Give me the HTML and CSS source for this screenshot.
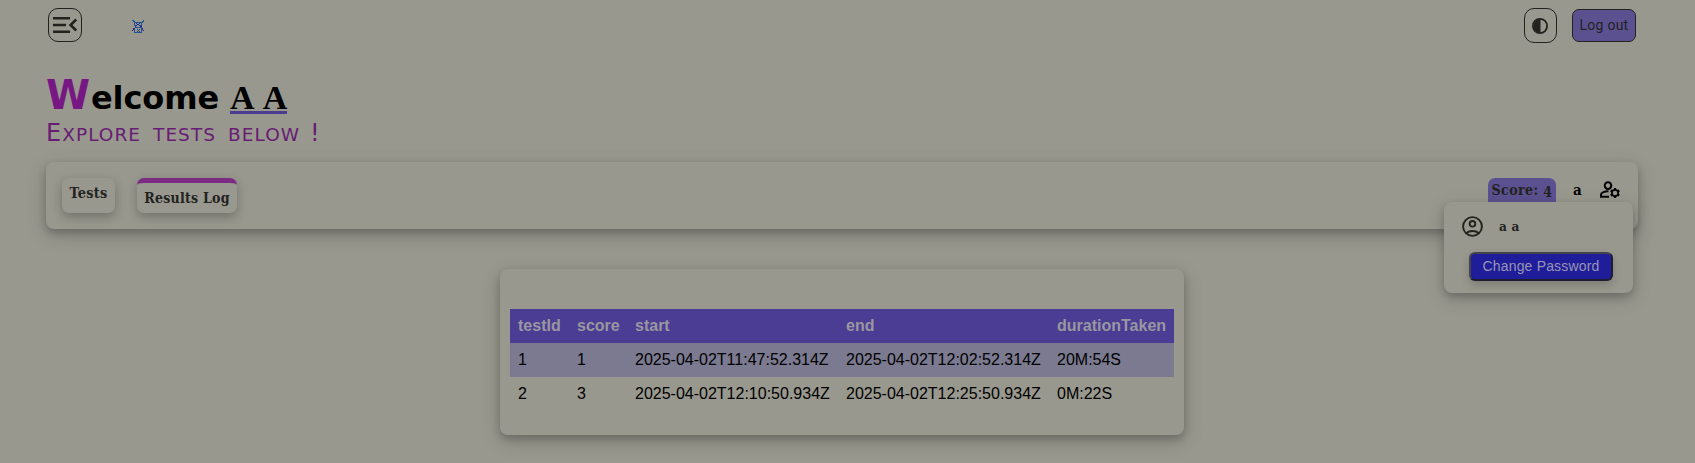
FILE: index.html
```html
<!DOCTYPE html>
<html lang="en">
<head>
<meta charset="utf-8">
<title>Dashboard</title>
<link rel="stylesheet" href="styles.css">
</head>
<body>
<header class="topbar">
  <button class="icon-btn menu-btn" aria-label="Menu">
    <svg width="26" height="18" viewBox="0 0 26 18" fill="none" stroke="#22221f" stroke-width="2.6"><path d="M1 2.200H18M1 9H14M1 15.800H18M24.200 3.500L18.600 9L24.200 14.500"/></svg>
  </button>
  <svg class="logo" width="12" height="13" viewBox="0 0 12 13" fill="none" shape-rendering="crispEdges"><path d="M0 .5H1V1.500H2V2.500H10V1.500H11V.5H12M2.500 3V5H3.500V7.500H9.500V12.500H2.500V8.500M9.500 3V5H8.500V7" stroke="#1f5495"/><path d="M4 3.500H5M7 3.500H8M5 4.500H7M4 5.500H5M7 5.500H8M3 6.500H4M8 6.500H10M1 8.500H3M10 8.500H11M0 10.500H1M1 9.500H2M11 10.500H12M10 9.500H11" stroke="#30208f"/><path d="M5 9.500H6M7 9.500H8M6 10.500H7M5 11.500H6M7 11.500H8" stroke="#293e79"/></svg>
  <div class="top-actions">
    <button class="icon-btn theme-btn" aria-label="Theme">
      <svg width="16" height="16" viewBox="0 0 16 16"><circle cx="8" cy="8" r="7.100" fill="none" stroke="#22221f" stroke-width="1.800"/><path d="M8.500 1A7 7 0 0 0 8.500 15Z" fill="#22221f"/></svg>
    </button>
    <button class="logout">Log out</button>
  </div>
</header>
<main>
  <h1 class="welcome"><span class="initial">W</span><span class="rest">elcome</span><span class="name">A A</span></h1>
  <p class="tagline">Explore tests below <span class="bang">!</span></p>
  <nav class="panel nav">
    <a class="tab tests">Tests</a>
    <a class="tab results">Results Log</a>
    <div class="account">
      <span class="score">Score: <span class="digit">4</span></span>
      <span class="user">a</span>
      <svg class="gear" width="22" height="18" viewBox="0 0 22 18" fill="none" stroke="#000" stroke-width="2"><circle cx="9" cy="4.600" r="3.300"/><path d="M9.500 10.200C6 10 2 11.700 2 13.500V15.700H10"/><circle cx="16" cy="12" r="3.100" stroke-width="1.700"/><path d="M16 7V9M16 15V17M11.700 9.500L13.400 10.500M18.600 13.500L20.300 14.500M20.300 9.500L18.600 10.500M13.400 13.500L11.700 14.500" stroke-width="2.200"/></svg>
    </div>
    <div class="popup">
      <div class="profile">
        <svg width="21" height="21" viewBox="0 0 21 21" fill="none" stroke="#22221f" stroke-width="1.900"><circle cx="10.500" cy="10.500" r="9.400"/><circle cx="10.500" cy="7.800" r="2.800"/><path d="M4.200 17.200C7.500 14.200 13.500 14.200 16.800 17.200"/></svg>
        <span>a a</span>
      </div>
      <button class="change">Change Password</button>
    </div>
  </nav>
  <section class="panel log">
    <table>
      <colgroup><col class="c-id"><col class="c-score"><col class="c-date"><col class="c-date"><col></colgroup>
      <thead><tr><th>testId</th><th>score</th><th>start</th><th>end</th><th>durationTaken</th></tr></thead>
      <tbody>
        <tr><td>1</td><td>1</td><td>2025-04-02T11:47:52.314Z</td><td>2025-04-02T12:02:52.314Z</td><td>20M:54S</td></tr>
        <tr><td>2</td><td>3</td><td>2025-04-02T12:10:50.934Z</td><td>2025-04-02T12:25:50.934Z</td><td>0M:22S</td></tr>
      </tbody>
    </table>
  </section>
</main>
</body>
</html>
```
FILE: styles.css
```css
* { box-sizing: border-box; }
body { margin: 0; height: 463px; overflow: hidden; background: #99988e; color: #000; font-family: "Liberation Sans", Arial, sans-serif; }
button { padding: 0; margin: 0; font-family: inherit; }
.topbar { height: 70px; padding: 8px 59px 0 48px; display: flex; align-items: flex-start; }
.icon-btn { display: flex; align-items: center; justify-content: center; background: transparent; border: 1px solid #22221f; border-radius: 10px; }
.menu-btn { width: 34px; height: 34px; }
.logo { margin: 12px 0 0 50px; }
.top-actions { margin-left: auto; display: flex; gap: 15px; }
.theme-btn { width: 33px; height: 35px; padding-right: 1px; }
.logout { width: 64px; height: 33px; margin-top: 1px; padding-bottom: 2px; border: 1px solid #22221f; border-radius: 7px; background: #5c5190; color: #22221f; font: 14px Roboto, sans-serif; letter-spacing: .25px; }
main { padding: 0 57px 0 46px; }
.welcome { display: flex; align-items: baseline; margin: 0; height: 49px; font: bold 32px/50px "DejaVu Sans", Verdana, sans-serif; white-space: nowrap; }
.initial { width: 45px; font-size: 40px; color: #761783; }
.rest { width: 139px; letter-spacing: -.1px; }
.name { font: bold 34px/26px "Liberation Serif", Georgia, serif; word-spacing: 3.500px; border-bottom: 3px solid #4b3c90; }
.tagline { margin: 0; height: 43px; line-height: 29px; font-family: "DejaVu Sans", Verdana, sans-serif; font-size: 18.500px; letter-spacing: 1.050px; word-spacing: 5px; text-transform: uppercase; color: #681c74; white-space: nowrap; }
.tagline::first-letter, .bang { font-size: 24px; line-height: 29px; }
.bang { margin-left: -2px; }
.panel { background: #99988e; border-radius: 8px; box-shadow: 0 4px 8px rgba(0,0,0,.2), 0 6px 20px rgba(0,0,0,.17); }
.nav { position: relative; height: 67px; padding: 16px 17px 0 16px; display: flex; align-items: flex-start; font: bold 14px "DejaVu Serif Condensed", "DejaVu Serif", Georgia, serif; letter-spacing: .25px; color: #22221f; }
.tab { height: 35px; line-height: 31px; border-radius: 7px; text-align: center; white-space: nowrap; box-shadow: 0 4px 8px rgba(0,0,0,.16), 0 4px 14px rgba(0,0,0,.1); }
.tests { width: 53px; margin-right: 22px; font-size: 14.300px; }
.results { width: 100px; border-top: 5px solid #7b2b82; }
.account { margin-left: auto; display: flex; align-items: flex-start; }
.score { width: 68px; height: 35px; line-height: 25px; text-align: center; background: #5c5190; border-radius: 7px; white-space: nowrap; letter-spacing: .4px; }
.digit { position: relative; top: 2px; }
.user { margin: 0 16px 0 17px; width: 10px; line-height: 24px; color: #000; font-size: 15px; }
.gear { margin-top: 3px; }
.popup { position: absolute; top: 40px; right: 5px; width: 189px; height: 91px; padding: 14px 18px 0; background: #99988e; border-radius: 8px; box-shadow: 0 4px 8px rgba(0,0,0,.2), 0 6px 20px rgba(0,0,0,.15); }
.profile { display: flex; align-items: center; gap: 16px; height: 21px; font-size: 13.500px; }
.profile span { padding-bottom: 2px; }
.change { display: block; width: 144px; height: 29px; margin: 15px 0 0 7px; padding-bottom: 1px; border: 2px solid; border-color: #44434b #1d1c30 #1d1c30 #44434b; border-radius: 6px; background: #1f1d99; color: #9995b5; font: 14px "Liberation Sans", Arial, sans-serif; letter-spacing: .18px; box-shadow: 0 4px 8px rgba(0,0,0,.18); }
.log { width: 684px; height: 166px; margin: 40px 0 0 454px; padding: 40px 10px 0; }
table { width: 664px; table-layout: fixed; border-collapse: collapse; font-size: 16px; }
.c-id { width: 59px; }
.c-score { width: 58px; }
.c-date { width: 211px; }
th, td { height: 34px; padding: 0 8px; text-align: left; white-space: nowrap; }
thead { background: #4b3c94; color: #99979f; }
tbody tr:first-child { background: #7b7a90; }
```
